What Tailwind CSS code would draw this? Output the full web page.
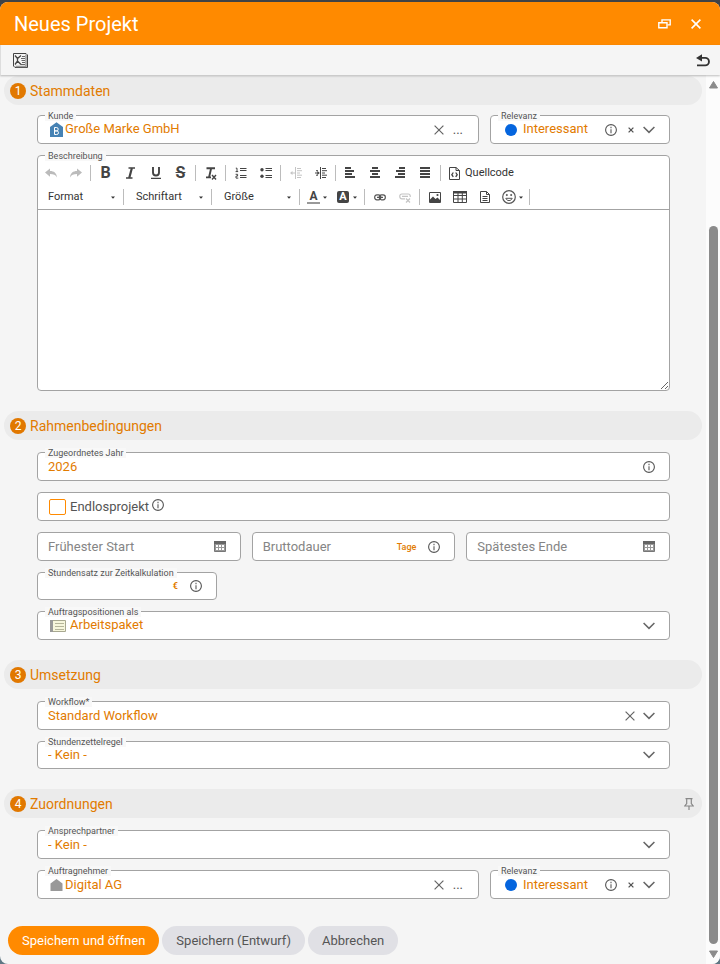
<!DOCTYPE html>
<html lang="de">
<head>
    <meta charset="UTF-8">
    <meta name="viewport" content="width=device-width, initial-scale=1.0">
    <title>Neues Projekt</title>
    <script src="https://cdn.jsdelivr.net/npm/@tailwindcss/browser@4"></script>
</head>
<body class="bg-linear-to-b from-[#3f4246] to-[#5f7784] font-['Roboto',sans-serif] text-[13px] leading-4 text-[#555]">

    <!-- Icon sprite -->
    <svg class="hidden">
        <symbol id="chevron" viewBox="0 0 12 8"><path d="M.6 1 6 6.400 11.400 1" fill="none" stroke="#666" stroke-width="1.500"/></symbol>
        <symbol id="info" viewBox="0 0 12 12"><circle cx="6" cy="6" r="5.400" fill="none" stroke="#555" stroke-width="1.100"/><path d="M6 2.800v1.400M6 5.200v4" stroke="#666" stroke-width="1.200"/></symbol>
        <symbol id="cross" viewBox="0 0 10 10"><path d="m.6.6 8.800 8.800M9.400.6.6 9.400" stroke="#666" stroke-width="1.200"/></symbol>
        <symbol id="small-cross" viewBox="0 0 6 6"><path d="m.6.6 4.800 4.800M5.400.6.6 5.400" stroke="#555" stroke-width="1.300"/></symbol>
        <symbol id="calendar" viewBox="0 0 12 11"><path d="M.5.5h11v10H.5z" fill="#999" stroke="#777"/><path d="M0 0h12v3H0z" fill="#666"/><path d="M2 4h2v2H2zM5 4h2v2H5zM8 4h2v2H8zM2 7h2v2H2zM5 7h2v2H5zM8 7h2v2H8z" fill="#fff"/></symbol>
        <symbol id="arrow" viewBox="0 0 4 3"><path d="M0 .5h4L2 2.800z" fill="#333"/></symbol>
    </svg>

    <div class="h-screen pt-[2px]">
        <div class="h-full flex flex-col bg-[#f5f5f5] rounded-lg overflow-hidden">

            <!-- Title bar -->
            <header class="h-[43px] shrink-0 flex items-center justify-between pl-3.5 pr-[19px] bg-[#ff8a00]">
                <h1 class="text-xl leading-6 text-white">Neues Projekt</h1>
                <div class="flex items-center gap-5">
                    <button aria-label="Fenster wiederherstellen">
                        <svg class="w-[13px] h-[10px]" viewBox="0 0 13 10" fill="none" stroke="#fff" stroke-width="1.400"><path d="M4 3V.9h8.200v5H9.500"/><path d="M.8 3.800h8.200v5H.8z"/></svg>
                    </button>
                    <button aria-label="Schließen">
                        <svg class="w-[10px] h-[10px]" viewBox="0 0 10 10" stroke="#fff" stroke-width="1.600"><path d="m.6.6 8.800 8.800M9.400.6.6 9.400"/></svg>
                    </button>
                </div>
            </header>

            <!-- Toolbar -->
            <div class="h-[30px] shrink-0 flex items-center justify-between pl-3 pr-[10px] border-l border-[#ddd] bg-[#f5f5f5] shadow-[0_1px_2px_rgba(0,0,0,0.25)] relative z-10">
                <button aria-label="Excel-Export">
                    <svg class="w-[15px] h-[15px]" viewBox="0 0 15 15" fill="none" stroke="#444"><path d="M.5.500h12.500l1.500 1.500v12.500H2L.5 13z"/><path d="M13 1.500v12H2.500" stroke="#999" stroke-width="1.500"/><path d="M9 3.500h3M8 5.500h4M8.500 7.500h3.500M9 9.500h3M8 11.500h4" stroke="#666"/><path d="m2 2.500 2.500 3 3.500-3M2 11.500l2.500-3.500L8 11.500M4.500 5.500V8" stroke-width="1.300"/></svg>
                </button>
                <button aria-label="Zurück">
                    <svg class="w-[14px] h-[13px]" viewBox="0 0 14 13"><path d="M4 3.900h5.200a3.700 3.700 0 0 1 0 7.500H1" fill="none" stroke="#333" stroke-width="1.900"/><path d="M0 4 6 .2v7.400z" fill="#333"/></svg>
                </button>
            </div>

            <div class="flex-1 min-h-0 flex">
                <main class="flex-1 min-w-0 pt-px">
                    <form>

                        <!-- 1 Stammdaten -->
                        <h2 class="h-[29px] mx-1 mb-2.5 pl-1.5 pr-2 flex items-center gap-1 rounded-full bg-[#ebebeb] text-sm text-[#e27b00]">
                            <span class="size-4 rounded-full bg-[#e17800] text-white text-xs leading-4 text-center">1</span>Stammdaten
                        </h2>
                        <div class="ml-[37px] mr-9 flex flex-col gap-[11px]">
                            <div class="flex gap-[11px]">
                                <div class="relative flex-1 min-w-0 h-[29px] flex items-center pl-3 pr-[15px] border border-[#a3a3a3] rounded bg-white">
                                    <label for="kunde" class="absolute left-[7px] -top-[5px] px-[3px] bg-[#f8f8f8] text-[9px] leading-[10px]">Kunde</label>
                                    <svg class="w-[13px] h-[15px] mr-0.5 shrink-0" viewBox="0 0 13 15"><path d="M0 5 6.500.300 13 5v10H0z" fill="#4682b4"/><path d="M4.500 5.500v7h2.200a1.800 1.800 0 0 0 0-3.600H4.500h2a1.700 1.700 0 0 0 0-3.400z" fill="none" stroke="#fff"/></svg>
                                    <input id="kunde" type="text" value="Große Marke GmbH" class="flex-1 min-w-0 pb-px text-[#e27b00] outline-none">
                                    <button type="button" aria-label="Kunde entfernen"><svg class="size-[10px]"><use href="#cross"/></svg></button>
                                    <button type="button" class="ml-[9px]" aria-label="Kunde auswählen">...</button>
                                </div>
                                <div class="relative w-[180px] h-[29px] flex items-center pl-3.5 pr-3.5 border border-[#a3a3a3] rounded bg-white">
                                    <label for="relevanz1" class="absolute left-[7px] -top-[5px] px-[3px] bg-[#f8f8f8] text-[9px] leading-[10px]">Relevanz</label>
                                    <span class="size-3 mr-1.5 rounded-full bg-[#0565de]"></span>
                                    <select id="relevanz1" class="flex-1 min-w-0 pb-px appearance-none text-[#e27b00] outline-none"><option>Interessant</option></select>
                                    <button type="button" aria-label="Info"><svg class="size-3"><use href="#info"/></svg></button>
                                    <button type="button" class="ml-[11px] mr-[9px]" aria-label="Relevanz entfernen"><svg class="size-[6px]"><use href="#small-cross"/></svg></button>
                                    <svg class="w-3 h-2"><use href="#chevron"/></svg>
                                </div>
                            </div>

                            <!-- Editor -->
                            <div class="relative border border-[#a3a3a3] rounded bg-white">
                                <label for="beschreibung" class="absolute left-[7px] -top-[5px] px-[3px] bg-[#f8f8f8] text-[9px] leading-[10px]">Beschreibung</label>
                                <div class="pt-[5px] border-b border-[#a3a3a3] text-[11px] text-[#333]">
                                    <div class="h-6 flex items-center">
                                        <button type="button" class="w-[25px] flex justify-center" aria-label="Rückgängig"><svg class="w-3 h-[10px]" viewBox="0 0 12 10"><path d="M0 4.500 5 .5v2.600c4 0 6.500 2 7 6.400C10.500 6.800 8.500 6 5 6v2.700z" fill="#bbb"/></svg></button>
                                        <button type="button" class="w-[25px] flex justify-center" aria-label="Wiederherstellen"><svg class="w-3 h-[10px]" viewBox="0 0 12 10"><path d="M12 4.500 7 .5v2.600C3 3.100.5 5.100 0 9.500 1.500 6.800 3.500 6 7 6v2.700z" fill="#bbb"/></svg></button>
                                        <span class="w-px h-4 mx-[2px] bg-[#bcbcbc]"></span>
                                        <button type="button" class="w-[25px] text-base font-bold text-[#444]" aria-label="Fett">B</button>
                                        <button type="button" class="w-[25px] flex justify-center" aria-label="Kursiv"><svg class="w-[9px] h-3" viewBox="0 0 9 12" fill="none" stroke="#444"><path d="M2.500 1H9M0 11h6.500" stroke-width="1.700"/><path d="M5.900 1 3.200 11" stroke-width="2.200"/></svg></button>
                                        <button type="button" class="w-[25px] flex justify-center" aria-label="Unterstrichen"><svg class="w-[10px] h-3" viewBox="0 0 10 12" fill="none" stroke="#444"><path d="M2 0v5.500a3 3 0 0 0 6 0V0" stroke-width="1.900"/><path d="M0 11.300h10" stroke-width="1.200"/></svg></button>
                                        <button type="button" class="w-[25px] text-base font-bold line-through text-[#444]" aria-label="Durchgestrichen">S</button>
                                        <span class="w-px h-4 mx-[2px] bg-[#bcbcbc]"></span>
                                        <button type="button" class="w-[25px] flex justify-center" aria-label="Formatierung entfernen"><svg class="w-3 h-[13px]" viewBox="0 0 12 13" fill="none" stroke="#444"><path d="M1.500 1.200H10M6.200 1 4 10.500M1 10.400h5" stroke-width="1.900"/><path d="m7 8 4 4.500M11 8l-4 4.500" stroke-width="1.400"/></svg></button>
                                        <span class="w-px h-4 mx-[2px] bg-[#bcbcbc]"></span>
                                        <button type="button" class="w-[25px] flex justify-center" aria-label="Nummerierte Liste"><svg class="w-3 h-3" viewBox="0 0 12 12" fill="none" stroke="#444"><path d="M5 1.500h6.500M5 3.500h6.500M5 8.500h6.500M5 10.500h6.500" stroke-width="1"/><path d="M.8 1.200h1.200v3.600M.6 4.600h2.600M.6 7.300h2v1.800H1v2h2.300"/></svg></button>
                                        <button type="button" class="w-[25px] flex justify-center" aria-label="Liste"><svg class="w-3 h-3" viewBox="0 0 12 12"><circle cx="2" cy="2.700" r="1.700" fill="#444"/><circle cx="2" cy="9.300" r="1.700" fill="#444"/><path d="M5.500 1.500H12M5.500 3.500H12M5.500 8.500H12M5.500 10.500H12" stroke="#444"/></svg></button>
                                        <span class="w-px h-4 mx-[2px] bg-[#bcbcbc]"></span>
                                        <button type="button" class="w-[25px] flex justify-center" aria-label="Einzug verringern"><svg class="w-3 h-3" viewBox="0 0 12 12" stroke="#c4c4c4"><path d="M5.500 0v12M7 1.500h4M7 3.700h5M7 6h3M7 8.200h5M7 10.500h4M2 6h3"/><path d="M0 6l2.500-2v4z" fill="#c4c4c4" stroke="none"/></svg></button>
                                        <button type="button" class="w-[25px] flex justify-center" aria-label="Einzug vergrößern"><svg class="w-3 h-3" viewBox="0 0 12 12" stroke="#444"><path d="M5.500 0v12M7 1.500h4M7 3.700h5M7 6h3M7 8.200h5M7 10.500h4M0 6h3M1 3.700h2M1 8.200h2"/><path d="M4.800 6 2.300 4v4z" fill="#444" stroke="none"/></svg></button>
                                        <span class="w-px h-4 mx-[2px] bg-[#bcbcbc]"></span>
                                        <button type="button" class="w-[25px] flex justify-center" aria-label="Linksbündig"><svg class="w-3 h-3" viewBox="0 0 12 12" stroke="#444" stroke-width="2"><path d="M0 1h6M0 4h9M0 7h7M0 10h10"/></svg></button>
                                        <button type="button" class="w-[25px] flex justify-center" aria-label="Zentriert"><svg class="w-3 h-3" viewBox="0 0 12 12" stroke="#444" stroke-width="2"><path d="M2 1h6M0 4h10M2 7h6M0 10h10"/></svg></button>
                                        <button type="button" class="w-[25px] flex justify-center" aria-label="Rechtsbündig"><svg class="w-3 h-3" viewBox="0 0 12 12" stroke="#444" stroke-width="2"><path d="M4 1h6M1 4h9M3 7h7M0 10h10"/></svg></button>
                                        <button type="button" class="w-[25px] flex justify-center" aria-label="Blocksatz"><svg class="w-3 h-3" viewBox="0 0 12 12" stroke="#444" stroke-width="2"><path d="M0 1h10M0 4h10M0 7h10M0 10h10"/></svg></button>
                                        <span class="w-px h-4 mx-[2px] bg-[#bcbcbc]"></span>
                                        <button type="button" class="ml-1.5 flex items-center gap-[5px]"><svg class="w-[11px] h-[13px]" viewBox="0 0 11 13" fill="none" stroke="#444"><path d="M.5.500h6.500l3.500 3v9H.5zM7 .5v3h3.500"/><path d="M4.300 5.500 2.800 7.700l1.500 2.200M6.700 5.500l1.500 2.200-1.500 2.200" stroke-width="1.300"/></svg>Quellcode</button>
                                    </div>
                                    <div class="h-6 flex items-center">
                                        <div class="w-[83px] flex items-center pl-2.5 pr-1.5">
                                            <select aria-label="Format" class="flex-1 min-w-0 appearance-none outline-none"><option>Format</option></select>
                                            <svg class="w-1 h-[3px] shrink-0"><use href="#arrow"/></svg>
                                        </div>
                                        <span class="w-px h-4 mx-[2px] bg-[#bcbcbc]"></span>
                                        <div class="w-[83px] flex items-center pl-2.5 pr-1.5">
                                            <select aria-label="Schriftart" class="flex-1 min-w-0 appearance-none outline-none"><option>Schriftart</option></select>
                                            <svg class="w-1 h-[3px] shrink-0"><use href="#arrow"/></svg>
                                        </div>
                                        <span class="w-px h-4 mx-[2px] bg-[#bcbcbc]"></span>
                                        <div class="w-[83px] flex items-center pl-2.5 pr-1.5">
                                            <select aria-label="Größe" class="flex-1 min-w-0 appearance-none outline-none"><option>Größe</option></select>
                                            <svg class="w-1 h-[3px] shrink-0"><use href="#arrow"/></svg>
                                        </div>
                                        <span class="w-px h-4 mx-[2px] bg-[#bcbcbc]"></span>
                                        <button type="button" class="w-[30px] flex items-center justify-center gap-[3px]" aria-label="Textfarbe"><span class="w-[13px] border-b-2 border-[#999] text-xs leading-[11px] font-bold text-[#444]">A</span><svg class="w-1 h-[3px]"><use href="#arrow"/></svg></button>
                                        <button type="button" class="w-[30px] flex items-center justify-center gap-1" aria-label="Hintergrundfarbe"><span class="w-3 h-3 rounded-xs bg-[#444] text-[11px] leading-3 font-bold text-white">A</span><svg class="w-1 h-[3px]"><use href="#arrow"/></svg></button>
                                        <span class="w-px h-4 mx-[2px] bg-[#bcbcbc]"></span>
                                        <button type="button" class="w-[25px] flex justify-center" aria-label="Link"><svg class="w-3 h-[7px]" viewBox="0 0 12 7" fill="none" stroke="#555" stroke-width="1.200"><rect x=".7" y=".8" width="6" height="5" rx="2.200"/><rect x="5.300" y=".8" width="6" height="5" rx="2.200"/><path d="M3 3.300h6"/></svg></button>
                                        <button type="button" class="w-[25px] flex justify-center" aria-label="Link entfernen"><svg class="w-3 h-[11px]" viewBox="0 0 12 11" fill="none" stroke="#c4c4c4" stroke-width="1.200"><path d="M6 6.800H2.800a2 2 0 0 1-2-2V4a2 2 0 0 1 2-2h6.400a2 2 0 0 1 2 2v1M3 4.400h6"/><path d="m7 6.500 4 4M11 6.500l-4 4"/></svg></button>
                                        <span class="w-px h-4 mx-[2px] bg-[#bcbcbc]"></span>
                                        <button type="button" class="w-[25px] flex justify-center" aria-label="Bild"><svg class="w-3 h-[11px]" viewBox="0 0 12 11"><path d="M.5.500h11v10H.5z" fill="#fff" stroke="#444"/><path d="M1 10V7.500L4 4.500l2.500 2.500L8.500 5.500 11 8v2z" fill="#444"/><circle cx="8.500" cy="3" r="1.100" fill="#444"/></svg></button>
                                        <button type="button" class="w-[25px] flex justify-center" aria-label="Tabelle"><svg class="w-3.5 h-3" viewBox="0 0 14 12" fill="none" stroke="#444"><path d="M.5.500h13v11H.5zM.5 4.500h13M.5 8h13M5 2v9.500M9.300 2v9.500"/><path d="M0 1.300h14" stroke-width="2.500"/></svg></button>
                                        <button type="button" class="w-[25px] flex justify-center" aria-label="Vorlage"><svg class="w-[10px] h-3" viewBox="0 0 10 12" fill="none" stroke="#444"><path d="M.5.500h6l3 3v8h-9z"/><path d="M6.500.500v3h3M2.500 5.500h5M2.500 7.500h5M2.500 9.500h5"/></svg></button>
                                        <button type="button" class="w-[30px] flex items-center justify-center gap-[3px]" aria-label="Smiley"><svg class="w-3.5 h-3.5" viewBox="0 0 14 14" fill="none" stroke="#555"><circle cx="7" cy="7" r="6.300" stroke-width="1.200"/><path d="M3.800 8.300c1 3 5.400 3 6.400 0z"/><circle cx="4.800" cy="5" r=".6" fill="#444"/><circle cx="9.200" cy="5" r=".6" fill="#444"/></svg><svg class="w-1 h-[3px]"><use href="#arrow"/></svg></button>
                                        <span class="w-px h-4 mx-[2px] bg-[#bcbcbc]"></span>
                                    </div>
                                </div>
                                <textarea id="beschreibung" class="block w-full h-[180px] p-2 resize-y outline-none"></textarea>
                            </div>
                        </div>

                        <!-- 2 Rahmenbedingungen -->
                        <h2 class="h-[29px] mx-1 mt-5 mb-3 pl-1.5 pr-2 flex items-center gap-1 rounded-full bg-[#ebebeb] text-sm text-[#e27b00]">
                            <span class="size-4 rounded-full bg-[#e17800] text-white text-xs leading-4 text-center">2</span>Rahmenbedingungen
                        </h2>
                        <div class="ml-[37px] mr-9 flex flex-col gap-[11px]">
                            <div class="relative h-[29px] flex items-center pl-2.5 pr-3.5 border border-[#a3a3a3] rounded bg-white">
                                <label for="jahr" class="absolute left-[7px] -top-[5px] px-[3px] bg-[#f8f8f8] text-[9px] leading-[10px]">Zugeordnetes Jahr</label>
                                <input id="jahr" type="text" value="2026" class="flex-1 min-w-0 text-[#e27b00] outline-none">
                                <button type="button" aria-label="Info"><svg class="size-3"><use href="#info"/></svg></button>
                            </div>
                            <div class="h-[29px] flex items-center pl-[11px] border border-[#a3a3a3] rounded bg-white">
                                <input id="endlos" type="checkbox" class="appearance-none w-[17px] h-4 border border-[#ff8a00] rounded-xs bg-white">
                                <label for="endlos" class="ml-1">Endlosprojekt</label>
                                <button type="button" class="ml-[3px] pb-[3px]" aria-label="Info"><svg class="size-3"><use href="#info"/></svg></button>
                            </div>
                            <div class="grid grid-cols-3 gap-[11px]">
                                <div class="h-[29px] flex items-center pl-2.5 pr-3.5 border border-[#a3a3a3] rounded bg-white">
                                    <input type="text" aria-label="Frühester Start" placeholder="Frühester Start" class="flex-1 min-w-0 placeholder:text-[#858585] outline-none">
                                    <button type="button" aria-label="Kalender"><svg class="w-3 h-[11px]"><use href="#calendar"/></svg></button>
                                </div>
                                <div class="h-[29px] flex items-center pl-2.5 pr-3.5 border border-[#a3a3a3] rounded bg-white">
                                    <input type="text" aria-label="Bruttodauer" placeholder="Bruttodauer" class="flex-1 min-w-0 placeholder:text-[#858585] outline-none">
                                    <span class="mr-3 text-[9px] font-medium text-[#e27b00]">Tage</span>
                                    <button type="button" aria-label="Info"><svg class="size-3"><use href="#info"/></svg></button>
                                </div>
                                <div class="h-[29px] flex items-center pl-2.5 pr-3.5 border border-[#a3a3a3] rounded bg-white">
                                    <input type="text" aria-label="Spätestes Ende" placeholder="Spätestes Ende" class="flex-1 min-w-0 placeholder:text-[#858585] outline-none">
                                    <button type="button" aria-label="Kalender"><svg class="w-3 h-[11px]"><use href="#calendar"/></svg></button>
                                </div>
                            </div>
                            <div class="relative w-[180px] h-7 flex items-center pl-2.5 pr-3.5 border border-[#a3a3a3] rounded bg-white">
                                <label for="stundensatz" class="absolute left-[7px] -top-[5px] px-[3px] bg-[#f8f8f8] text-[9px] leading-[10px]">Stundensatz zur Zeitkalkulation</label>
                                <input id="stundensatz" type="text" class="flex-1 min-w-0 text-[#e27b00] outline-none">
                                <span class="mr-3 text-[9px] font-bold text-[#e27b00]">€</span>
                                <button type="button" aria-label="Info"><svg class="size-3"><use href="#info"/></svg></button>
                            </div>
                            <div class="relative h-[29px] flex items-center pl-3 pr-3.5 border border-[#a3a3a3] rounded bg-white">
                                <label for="positionen" class="absolute left-[7px] -top-[5px] px-[3px] bg-[#f8f8f8] text-[9px] leading-[10px]">Auftragspositionen als</label>
                                <svg class="w-4 h-3 mr-1 shrink-0" viewBox="0 0 16 12"><path d="M.5.500h15v11H.5z" fill="#f6f6dc" stroke="#a8a890"/><path d="M0 0h3v12H0z" fill="#999"/><path d="M5 3.500h9M5 6.500h9M5 9.500h9" stroke="#b5b59a"/></svg>
                                <select id="positionen" class="flex-1 min-w-0 pb-px appearance-none text-[#e27b00] outline-none"><option>Arbeitspaket</option></select>
                                <svg class="w-3 h-2"><use href="#chevron"/></svg>
                            </div>
                        </div>

                        <!-- 3 Umsetzung -->
                        <h2 class="h-[29px] mx-1 mt-5 mb-3 pl-1.5 pr-2 flex items-center gap-1 rounded-full bg-[#ebebeb] text-sm text-[#e27b00]">
                            <span class="size-4 rounded-full bg-[#e17800] text-white text-xs leading-4 text-center">3</span>Umsetzung
                        </h2>
                        <div class="ml-[37px] mr-9 flex flex-col gap-[11px]">
                            <div class="relative h-[29px] flex items-center pl-2.5 pr-3.5 border border-[#a3a3a3] rounded bg-white">
                                <label for="workflow" class="absolute left-[7px] -top-[5px] px-[3px] bg-[#f8f8f8] text-[9px] leading-[10px]">Workflow*</label>
                                <select id="workflow" class="flex-1 min-w-0 appearance-none text-[#e27b00] outline-none"><option>Standard Workflow</option></select>
                                <button type="button" class="mr-2" aria-label="Workflow entfernen"><svg class="size-[10px]"><use href="#cross"/></svg></button>
                                <svg class="w-3 h-2"><use href="#chevron"/></svg>
                            </div>
                            <div class="relative h-7 flex items-center pl-2.5 pr-3.5 border border-[#a3a3a3] rounded bg-white">
                                <label for="zettelregel" class="absolute left-[7px] -top-[5px] px-[3px] bg-[#f8f8f8] text-[9px] leading-[10px]">Stundenzettelregel</label>
                                <select id="zettelregel" class="flex-1 min-w-0 appearance-none text-[#e27b00] outline-none"><option>- Kein -</option></select>
                                <svg class="w-3 h-2"><use href="#chevron"/></svg>
                            </div>
                        </div>

                        <!-- 4 Zuordnungen -->
                        <h2 class="h-[29px] mx-1 mt-5 mb-3 pl-1.5 pr-2 flex items-center gap-1 rounded-full bg-[#ebebeb] text-sm text-[#e27b00]">
                            <span class="size-4 rounded-full bg-[#e17800] text-white text-xs leading-4 text-center">4</span>Zuordnungen
                            <button type="button" class="ml-auto" aria-label="Anheften"><svg class="w-[10px] h-3" viewBox="0 0 10 12" fill="none" stroke="#888" stroke-width="1.200"><path d="M1.500.700h7M2.700.700v4.800L.8 8h8.400L7.300 5.500V.700M5 8v4"/></svg></button>
                        </h2>
                        <div class="ml-[37px] mr-9 flex flex-col gap-[11px]">
                            <div class="relative h-[29px] flex items-center pl-2.5 pr-3.5 border border-[#a3a3a3] rounded bg-white">
                                <label for="partner" class="absolute left-[7px] -top-[5px] px-[3px] bg-[#f8f8f8] text-[9px] leading-[10px]">Ansprechpartner</label>
                                <select id="partner" class="flex-1 min-w-0 appearance-none text-[#e27b00] outline-none"><option>- Kein -</option></select>
                                <svg class="w-3 h-2"><use href="#chevron"/></svg>
                            </div>
                            <div class="flex gap-[11px]">
                                <div class="relative flex-1 min-w-0 h-[29px] flex items-center pl-3 pr-[15px] border border-[#a3a3a3] rounded bg-white">
                                    <label for="nehmer" class="absolute left-[7px] -top-[5px] px-[3px] bg-[#f8f8f8] text-[9px] leading-[10px]">Auftragnehmer</label>
                                    <svg class="w-[13px] h-3 mr-0.5 shrink-0" viewBox="0 0 13 12"><path d="M.5 4.500 6.500 0l6 4.500V12H.5z" fill="#999"/></svg>
                                    <input id="nehmer" type="text" value="Digital AG" class="flex-1 min-w-0 text-[#e27b00] outline-none">
                                    <button type="button" aria-label="Auftragnehmer entfernen"><svg class="size-[10px]"><use href="#cross"/></svg></button>
                                    <button type="button" class="ml-[9px]" aria-label="Auftragnehmer auswählen">...</button>
                                </div>
                                <div class="relative w-[180px] h-[29px] flex items-center pl-3.5 pr-3.5 border border-[#a3a3a3] rounded bg-white">
                                    <label for="relevanz2" class="absolute left-[7px] -top-[5px] px-[3px] bg-[#f8f8f8] text-[9px] leading-[10px]">Relevanz</label>
                                    <span class="size-3 mr-1.5 rounded-full bg-[#0565de]"></span>
                                    <select id="relevanz2" class="flex-1 min-w-0 appearance-none text-[#e27b00] outline-none"><option>Interessant</option></select>
                                    <button type="button" aria-label="Info"><svg class="size-3"><use href="#info"/></svg></button>
                                    <button type="button" class="ml-[11px] mr-[9px]" aria-label="Relevanz entfernen"><svg class="size-[6px]"><use href="#small-cross"/></svg></button>
                                    <svg class="w-3 h-2"><use href="#chevron"/></svg>
                                </div>
                            </div>
                        </div>

                        <!-- Actions -->
                        <div class="mt-[27px] ml-2 flex gap-[3px]">
                            <button type="submit" class="h-[29px] px-3.5 rounded-full bg-[#ff8a00] text-white">Speichern und öffnen</button>
                            <button type="button" class="h-[29px] px-3.5 rounded-full bg-[#e0e0e5]">Speichern (Entwurf)</button>
                            <button type="button" class="h-[29px] px-3.5 rounded-full bg-[#e0e0e5]">Abbrechen</button>
                        </div>
                    </form>
                </main>

                <!-- Scrollbar -->
                <div class="w-3.5 flex flex-col items-center pt-[6px] pb-[6px] bg-[#fcfcfc]" aria-hidden="true">
                    <svg class="w-[9px] h-2" viewBox="0 0 9 8"><path d="M4.500.500 8.500 7h-8z" fill="#8b8b8b" stroke="#8b8b8b" stroke-linejoin="round"/></svg>
                    <div class="grow-[137]"></div>
                    <div class="w-[9px] grow-[718] rounded-full bg-[#8b8b8b]"></div>
                    <svg class="w-[9px] h-2 mt-1.5" viewBox="0 0 9 8"><path d="M4.500 7.500.500 1h8z" fill="#8b8b8b" stroke="#8b8b8b" stroke-linejoin="round"/></svg>
                </div>
            </div>
        </div>
    </div>
</body>
</html>
